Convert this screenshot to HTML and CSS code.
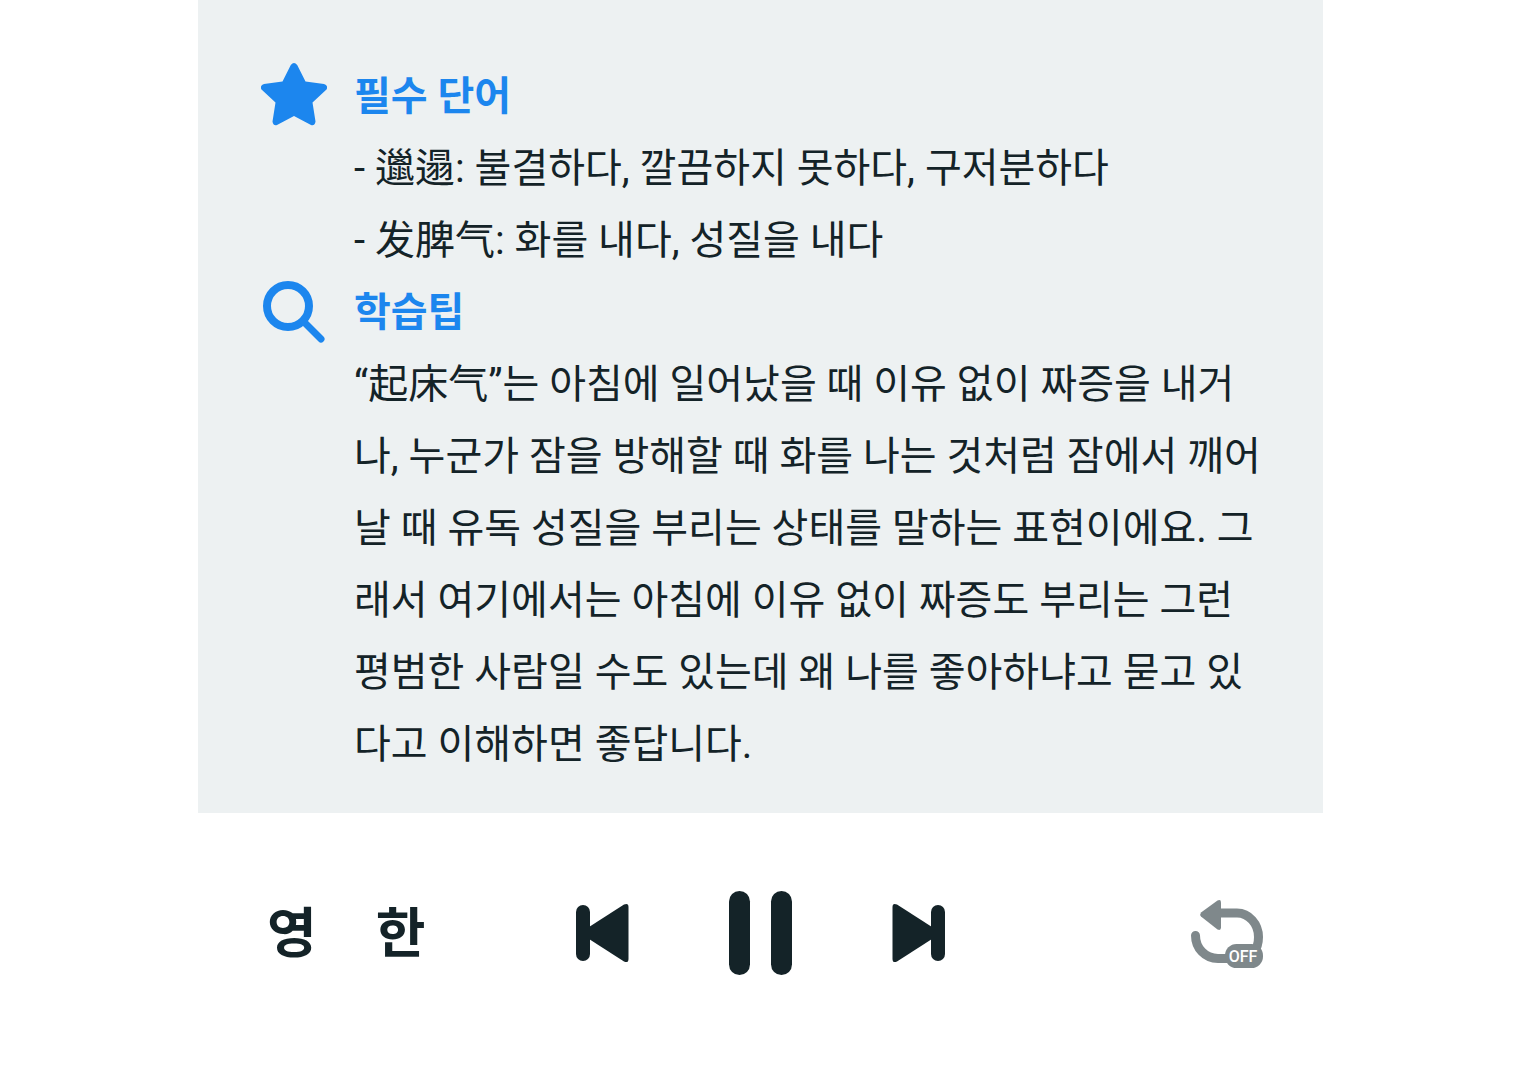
FILE: index.html
```html
<!DOCTYPE html>
<html lang="ko">
<head>
<meta charset="utf-8">
<meta name="viewport" content="width=device-width, initial-scale=1">
<title>필수 단어 · 학습팁</title>
<link rel="stylesheet" href="styles.css">
</head>
<body>
<div class="app">
  <main class="notes">
    <section class="note">
      <svg class="note-icon" viewBox="0 0 66 66" aria-hidden="true"><path d="M29.800 3Q33 -1 36.200 3L44.500 19.500L63 22Q67.500 23.500 65.500 27.500L51.500 40.500L54.500 59.500Q54 64 50 63L33 54L16 63Q12 64 11.500 59.500L14.500 40.500L.5 27.500Q-1.500 23.500 3 22L21.500 19.500Z"/></svg>
      <div class="note-body">
        <h2 class="note-title">필수 단어</h2>
        <p>- 邋遢: 불결하다, 깔끔하지 못하다, 구저분하다</p>
        <p>- 发脾气: 화를 내다, 성질을 내다</p>
      </div>
    </section>
    <section class="note">
      <svg class="note-icon" viewBox="0 -1 66 66" aria-hidden="true"><g fill="none" stroke="#1c86ee" stroke-width="8" stroke-linecap="round"><circle cx="27" cy="27" r="21"/><path d="M43 43L60 60" stroke-width="7"/></g></svg>
      <div class="note-body">
        <h2 class="note-title">학습팁</h2>
        <p>“起床气”는 아침에 일어났을 때 이유 없이 짜증을 내거나, 누군가 잠을 방해할 때 화를 나는 것처럼 잠에서 깨어날 때 유독 성질을 부리는 상태를 말하는 표현이에요. 그래서 여기에서는 아침에 이유 없이 짜증도 부리는 그런 평범한 사람일 수도 있는데 왜 나를 좋아하냐고 묻고 있다고 이해하면 좋답니다.</p>
      </div>
    </section>
  </main>
  <footer class="player">
    <div class="languages">
      <button class="language" type="button">영</button>
      <button class="language" type="button">한</button>
    </div>
    <div class="transport">
      <button class="control" type="button" aria-label="이전"><svg width="54" height="60" viewBox="0 0 54 60"><rect x="1" y="2" width="14" height="56" rx="7"/><path d="M14 24L49 1.500Q53.500 -.5 53.500 4V56Q53.500 60.500 49 58.500L14 36Z"/></svg></button>
      <button class="control" type="button" aria-label="일시정지"><svg width="63" height="84" viewBox="0 0 63 84"><rect width="21" height="84" rx="10.500"/><rect x="42" width="21" height="84" rx="10.500"/></svg></button>
      <button class="control" type="button" aria-label="다음"><svg width="54" height="60" viewBox="0 0 54 60"><rect x="39" y="2" width="14" height="56" rx="7"/><path d="M40 24L5 1.500Q.5 -.5 .5 4V56Q.5 60.500 5 58.500L40 36Z"/></svg></button>
    </div>
    <button class="control repeat" type="button" aria-label="반복 끄기"><svg width="72" height="70" viewBox="0 -2 72 70"><path d="M4.500 35.500C4.500 48 14 58.500 27 58.500H50C61 58 67.500 49 67.500 37C67.500 24 58 13 46 13H28" fill="none" stroke="#7f888b" stroke-width="9" stroke-linecap="round"/><path d="M10 12.500Q8.500 14.500 10 16.500L26.500 29.500Q30 31 30 27.500V2.500Q30 -1 26.500 .5Z"/><rect x="34" y="44" width="38" height="24" rx="11.500"/><text class="off" x="52" y="62" text-anchor="middle">OFF</text></svg></button>
  </footer>
</div>
</body>
</html>
```
FILE: styles.css
```css
* {
  box-sizing: border-box;
}

body {
  margin: 0;
  background: #fff;
  color: #142328;
  font-family: Lato, "Noto Sans CJK KR", sans-serif;
}

.app {
  max-width: 1125px;
  margin: 0 auto;
}

.notes {
  padding: 61px 54px 32px 63px;
  background: #edf1f2;
}

.note {
  display: flex;
  gap: 27px;
}

.note-icon {
  flex: none;
  width: 66px;
  height: 66px;
  margin-top: 1px;
  fill: #1c86ee;
}

.note-body {
  flex: 1;
  font-family: Roboto, "Noto Sans CJK KR", sans-serif;
  font-size: 40px;
  line-height: 72px;
}

.note-title,
.note-body p {
  margin: 0;
}

.note-title {
  color: #1c86ee;
  font-size: 40px;
  font-weight: 700;
}

.player {
  display: grid;
  grid-template-columns: 1fr auto 1fr;
  align-items: center;
  padding: 78px 60px 72px;
}

.languages {
  display: flex;
  gap: 59px;
  margin-left: 9px;
}

.language,
.control {
  padding: 0;
  border: 0;
  background: none;
  color: inherit;
}

.language {
  font-family: inherit;
  font-size: 54px;
  font-weight: 700;
  line-height: 84px;
}

.transport {
  display: flex;
  align-items: center;
  gap: 100px;
}

.control {
  fill: #142328;
}

.control svg {
  display: block;
}

.repeat {
  justify-self: end;
  fill: #7f888b;
}

.off {
  fill: #fff;
  font-family: Roboto, sans-serif;
  font-size: 16px;
  font-weight: 500;
}
```
